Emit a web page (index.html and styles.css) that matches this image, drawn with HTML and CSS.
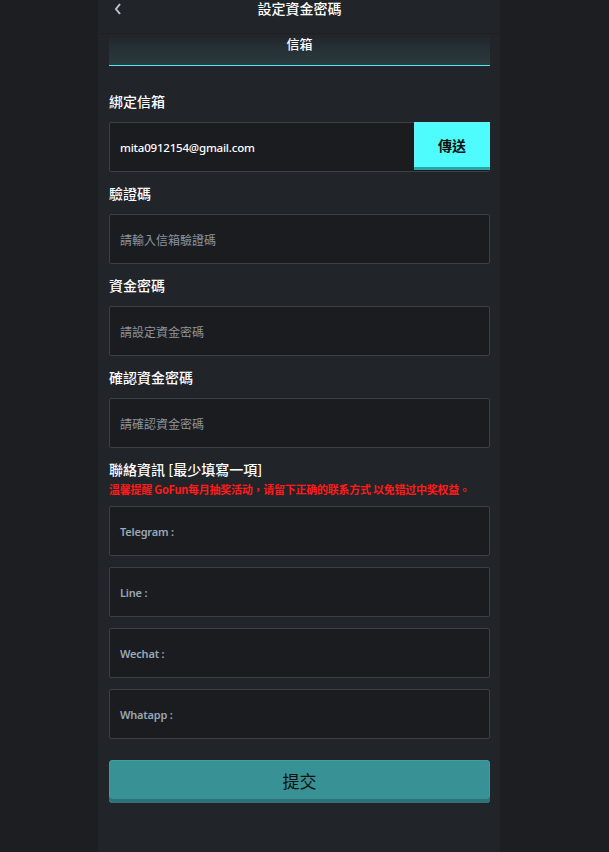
FILE: index.html
```html
<!DOCTYPE html>
<html lang="zh-Hant">
<head>
<meta charset="utf-8">
<title>設定資金密碼</title>
<link rel="stylesheet" href="styles.css">
</head>
<body>
<div class="page">
  <div class="header">
    <span class="back">
      <svg width="10" height="14" viewBox="0 0 10 14"><path d="M7 2 L3 7 L7 12" fill="none" stroke="#b9c3cf" stroke-width="2"/></svg>
    </span>
    <span class="title">設定資金密碼</span>
  </div>
  <div class="content">
    <div class="tab">信箱</div>

    <div class="label first">綁定信箱</div>
    <div class="field with-btn">
      <span class="value">mita0912154@gmail.com</span>
      <button class="send">傳送</button>
    </div>

    <div class="label">驗證碼</div>
    <div class="field"><span class="ph">請輸入信箱驗證碼</span></div>

    <div class="label">資金密碼</div>
    <div class="field"><span class="ph">請設定資金密碼</span></div>

    <div class="label">確認資金密碼</div>
    <div class="field"><span class="ph">請確認資金密碼</span></div>

    <div class="label">聯絡資訊 [最少填寫一項]</div>
    <div class="notice">溫馨提醒 GoFun每月抽奖活动，请留下正确的联系方式 以免错过中奖权益。</div>

    <div class="contacts">
      <div class="field"><span class="cl">Telegram :</span></div>
      <div class="field"><span class="cl">Line :</span></div>
      <div class="field"><span class="cl">Wechat :</span></div>
      <div class="field"><span class="cl">Whatapp :</span></div>
    </div>

    <button class="submit">提交</button>
  </div>
</div>
</body>
</html>
```
FILE: styles.css
```css
html, body {
  margin: 0;
  padding: 0;
  background: #1c1e22;
  height: 100%;
}
body {
  font-family: "Noto Sans", "Noto Sans CJK TC", sans-serif;
  color: #ffffff;
}
.page {
  width: 402px;
  margin-left: 98px;
  min-height: 852px;
  background: #212429;
  box-sizing: border-box;
  padding-left: 1px;
}
.header {
  height: 34px;
  border-bottom: 1px solid #1d1f23;
  box-sizing: border-box;
  display: flex;
  justify-content: center;
  align-items: flex-start;
  padding-top: 1px;
  position: relative;
}
.back {
  position: absolute;
  left: 14px;
  top: 1px;
  width: 12px;
  height: 16px;
  display: flex;
  align-items: center;
}
.title {
  font-size: 14px;
  line-height: 15px;
  font-weight: 500;
  font-family: "Noto Sans CJK TC", sans-serif;
}
.content {
  padding: 0 10px 0 10px;
  display: flex;
  flex-direction: column;
}
.tab {
  height: 32px;
  box-sizing: border-box;
  background: linear-gradient(to bottom, #212429 0%, #232a2f 20%, #2b3b3f 100%);
  border-bottom: 1.5px solid #4ee9ed;
  text-align: center;
  font-family: "Noto Sans CJK TC", sans-serif;
  font-size: 13px;
  line-height: 20px;
  font-weight: 500;
}
.label {
  font-family: "Noto Sans CJK TC", sans-serif;
  font-size: 14px;
  line-height: 20px;
  font-weight: 500;
  margin: 11px 0 11px;
}
.label.first {
  margin-top: 25px;
}
.field {
  height: 50px;
  box-sizing: border-box;
  border: 1px solid #3c3f44;
  border-radius: 2px;
  background: #1b1c20;
  display: flex;
  align-items: center;
  padding-left: 10px;
  position: relative;
}
.field.with-btn {
  justify-content: space-between;
  padding-right: 0;
}
.value {
  font-family: "Noto Sans", sans-serif;
  font-size: 11.5px;
  color: #ffffff;
  font-weight: 500;
  letter-spacing: -0.2px;
}
.ph {
  font-family: "Noto Sans CJK TC", sans-serif;
  font-size: 12px;
  color: #8c939b;
}
.cl {
  font-family: "Noto Sans", sans-serif;
  font-size: 11px;
  color: #9aa7b5;
  font-weight: 600;
  letter-spacing: -0.2px;
}
.send {
  align-self: flex-start;
  margin-top: -1px;
  margin-right: -1px;
  width: 76px;
  height: 48px;
  border: none;
  border-radius: 0;
  background: #4efcfd;
  box-shadow: inset 0 -3px 0 #2ba5a8, inset 0 0 0 1px #6ff0f2;
  font-family: "Noto Sans CJK TC", sans-serif;
  font-size: 14px;
  font-weight: 700;
  color: #111;
  padding: 0 0 2px;
}
.notice {
  font-family: "Noto Sans CJK SC", sans-serif;
  font-size: 11px;
  line-height: 14px;
  color: #ff1a1a;
  font-weight: 700;
  margin-top: -8px;
  margin-bottom: 10px;
  white-space: nowrap;
  letter-spacing: -0.25px;
}
.contacts {
  display: flex;
  flex-direction: column;
  gap: 11px;
}
.submit {
  margin-top: 21px;
  height: 43px;
  border: none;
  border-radius: 4px;
  background: #389194;
  box-shadow: inset 0 -4px 0 #2d7275, inset 0 0 0 1px #3e9da0;
  font-family: "Noto Sans CJK TC", sans-serif;
  font-size: 17px;
  color: #111;
  padding: 0 0 3px;
}
```
